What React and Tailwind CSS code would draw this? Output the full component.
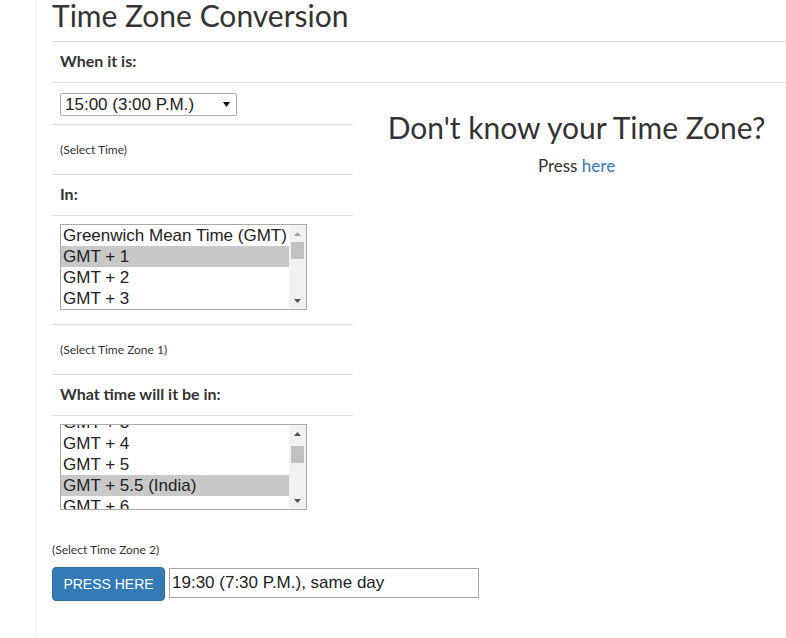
import React from 'react';

const lato = "font-['Lato','Open_Sans',sans-serif]";
const arial = "font-['Liberation_Sans',Arial,sans-serif]";

const zones1 = ['Greenwich Mean Time (GMT)', 'GMT + 1', 'GMT + 2', 'GMT + 3'];
const zones2 = ['GMT + 3', 'GMT + 4', 'GMT + 5', 'GMT + 5.5 (India)', 'GMT + 6'];

// small triangle used by the fake scrollbar
const Arrow = ({ up, color }) => (
    <svg width="7" height="4" viewBox="0 0 7 4" className="block mx-auto">
        {up ? <polygon points="0,4 7,4 3.5,0" fill={color} /> : <polygon points="0,0 7,0 3.5,4" fill={color} />}
    </svg>
);

const ListBox = ({ items, selected, shift, thumb, upColor }) => (
    <div className="w-[247px] h-[86px] border border-[#a9a9a9] bg-white flex overflow-hidden">
        <div className="flex-1 overflow-hidden">
            <div className={shift}>
                {items.map((item) => (
                    <div
                        key={item}
                        className={`h-[21px] leading-[21px] pl-[2px] text-[17px] text-[#222] whitespace-nowrap ${item === selected ? 'bg-[#c8c8c8]' : ''}`}
                    >
                        {item}
                    </div>
                ))}
            </div>
        </div>
        <div className="w-[17px] bg-[#f1f1f1] flex flex-col">
            <div className="h-[17px] flex items-center">
                <Arrow up color={upColor} />
            </div>
            <div className="flex-1 px-[2px]">
                <div className={`h-[17px] bg-[#c1c1c1] ${thumb}`}></div>
            </div>
            <div className="h-[17px] flex items-center">
                <Arrow color="#505050" />
            </div>
        </div>
    </div>
);

const Label = ({ children }) => (
    <div className="h-[41px] border-b border-[#ddd] pt-[9px] px-[8px] text-[16px] leading-[20px] font-bold text-[#333]">
        {children}
    </div>
);

const Hint = ({ children }) => (
    <div className="h-[50px] border-b border-[#ddd] px-[8px] flex items-center text-[12px] leading-[14px] text-[#333]">
        {children}
    </div>
);

const App = () => {
    return (
        <div className={`w-[786px] h-[638px] bg-white ${lato}`}>
            <div className="ml-[35px] h-full border-l border-[#f3f3f3] pl-[16px]">
                {/* title */}
                <div className="h-[42px] border-b border-[#ddd] text-[30px] leading-[30px] text-[#333]">
                    Time Zone Conversion
                </div>
                <Label>When it is:</Label>

                <div className="flex">
                    {/* left form column */}
                    <div className="w-[301px] shrink-0">
                        <div className="h-[42px] border-b border-[#ddd] pt-[10px] px-[8px]">
                            <div className={`w-[177px] h-[23px] border border-[#a9a9a9] rounded-[2px] flex items-center justify-between pl-[4px] pr-[6px] text-[17px] text-[#222] ${arial}`}>
                                <span>15:00 (3:00 P.M.)</span>
                                <svg width="7" height="5" viewBox="0 0 7 5"><polygon points="0,0 7,0 3.5,5" fill="#111" /></svg>
                            </div>
                        </div>
                        <Hint>(Select Time)</Hint>
                        <Label>In:</Label>
                        <div className={`h-[109px] border-b border-[#ddd] pt-[8px] px-[8px] ${arial}`}>
                            <ListBox items={zones1} selected="GMT + 1" shift="" thumb="mt-0" upColor="#a3a3a3" />
                        </div>
                        <Hint>(Select Time Zone 1)</Hint>
                        <Label>What time will it be in:</Label>
                        <div className={`pt-[8px] px-[8px] ${arial}`}>
                            <ListBox items={zones2} selected="GMT + 5.5 (India)" shift="-mt-[13px]" thumb="mt-[4px]" upColor="#505050" />
                        </div>
                    </div>

                    {/* right help column */}
                    <div className="flex-1 ml-[14px] text-center text-[#333]">
                        <div className="mt-[28px] text-[30px] leading-[33px]">Don't know your Time Zone?</div>
                        <div className="mt-[10px] text-[17px] leading-[24px]">
                            Press <a className="text-[#337ab7]">here</a>
                        </div>
                    </div>
                </div>

                <div className="mt-[33px] text-[12px] leading-[14px] text-[#333]">(Select Time Zone 2)</div>
                <div className={`mt-[10px] flex items-start gap-[4px] ${arial}`}>
                    <button className="w-[113px] h-[34px] bg-[#337ab7] border border-[#2e6da4] rounded-[4px] text-white text-[14px] whitespace-nowrap">
                        PRESS HERE
                    </button>
                    <div className="mt-[1px] w-[310px] h-[30px] border border-[#a9a9a9] pl-[2px] flex items-center text-[17px] text-[#222]">
                        19:30 (7:30 P.M.), same day
                    </div>
                </div>
            </div>
        </div>
    );
};

export default App;
